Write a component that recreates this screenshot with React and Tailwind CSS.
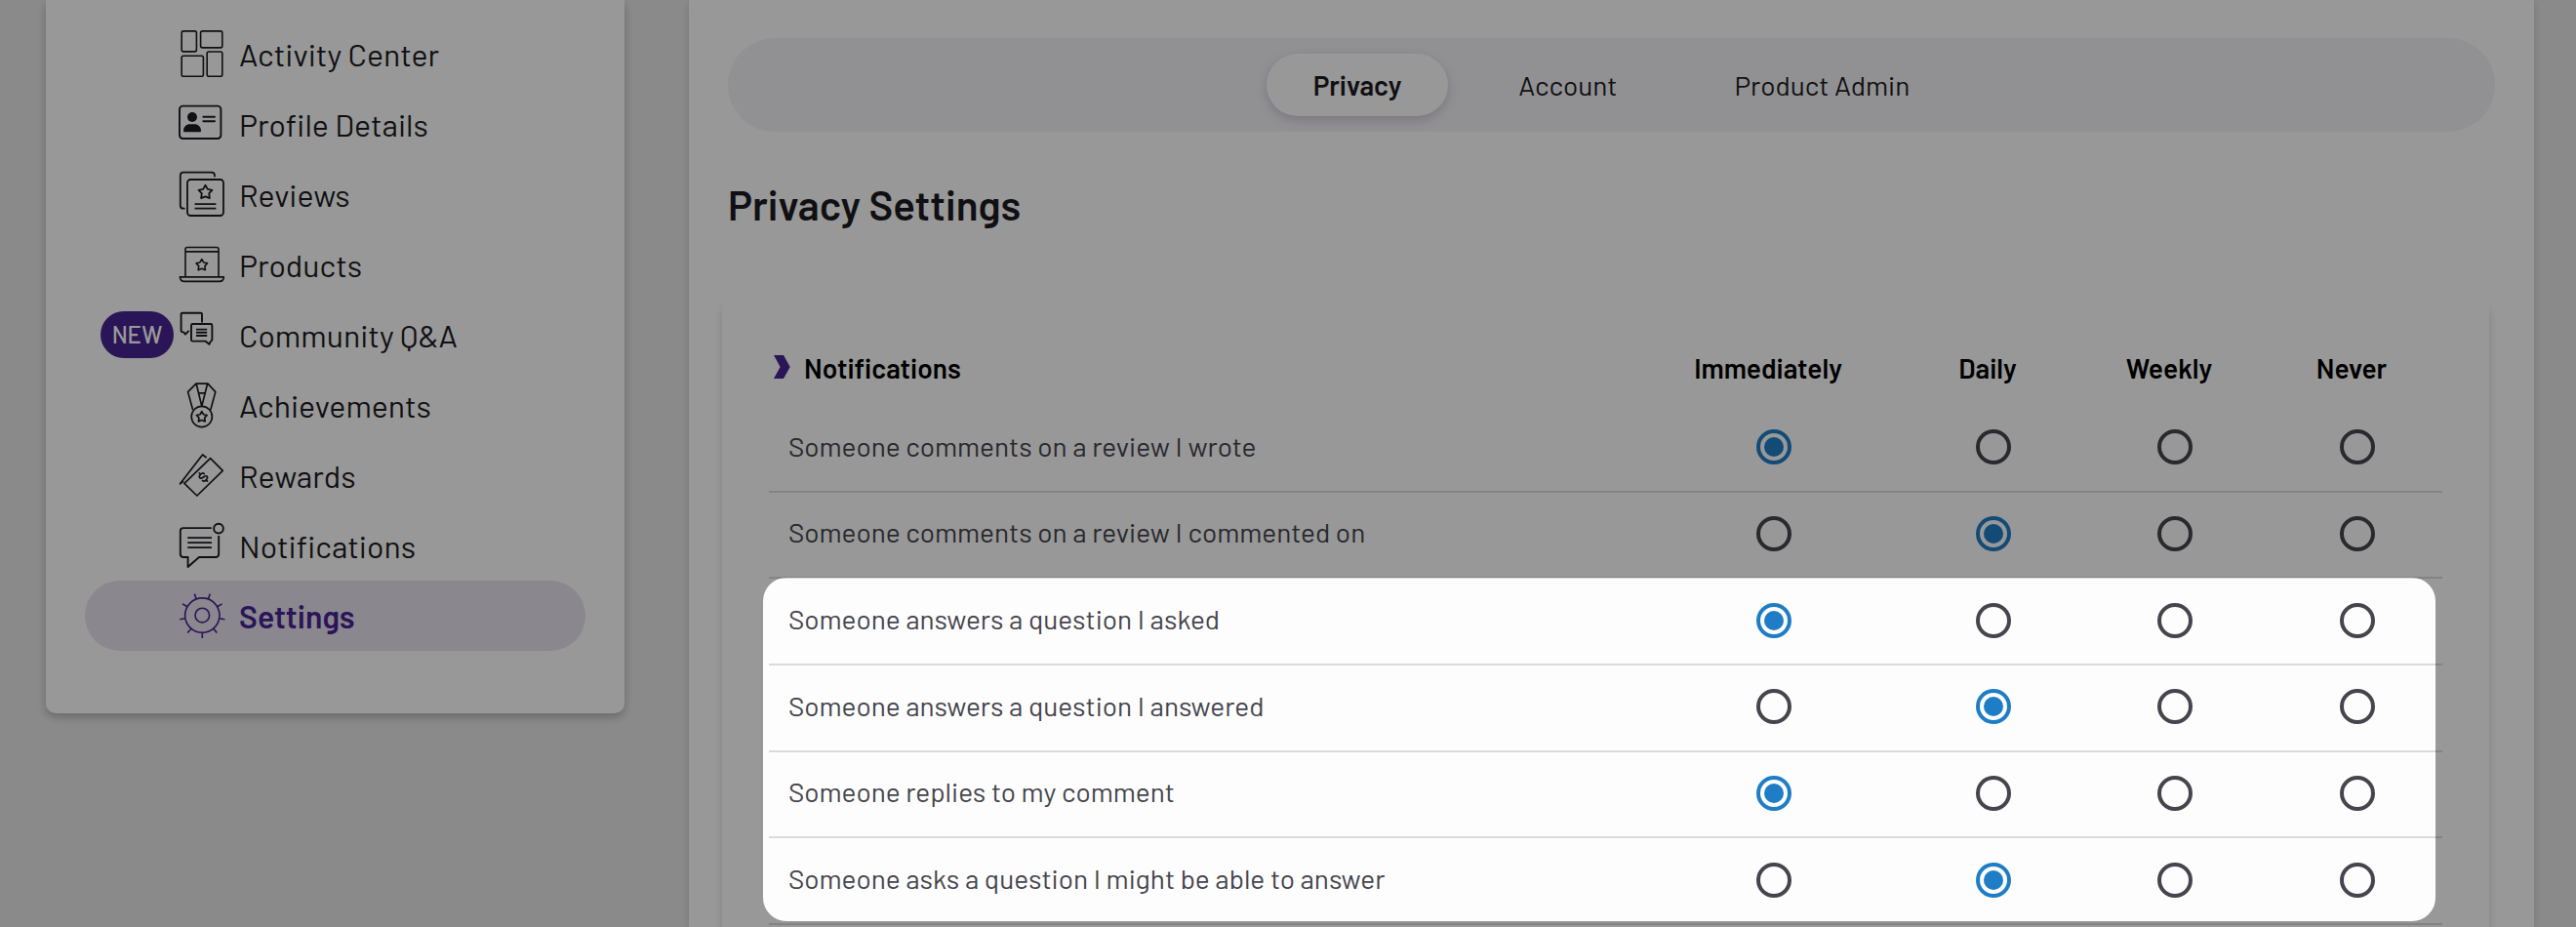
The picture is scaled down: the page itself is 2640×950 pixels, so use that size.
const STAR =
  "M0 -1 L0.32 -0.44 L0.96 -0.31 L0.52 0.17 L0.6 0.84 L0 0.6 L-0.6 0.84 L-0.52 0.17 L-0.96 -0.31 L-0.32 -0.44 Z";

function Star({ x, y, r, w = 1.6 }) {
  return (
    <path
      d={STAR}
      transform={`translate(${x} ${y}) scale(${r})`}
      strokeWidth={w / r}
      strokeLinejoin="round"
    />
  );
}

function Icon({ children, width = 1.6 }) {
  return (
    <svg
      viewBox="0 0 48 48"
      className="size-12 shrink-0"
      fill="none"
      stroke="currentColor"
      strokeWidth={width}
    >
      {children}
    </svg>
  );
}

const ActivityIcon = () => (
  <Icon width={1.6}>
    <rect x="3.2" y="0.9" width="15.2" height="21" rx="1.8" />
    <rect x="22.6" y="0.9" width="22.2" height="17" rx="1.8" />
    <rect x="3.2" y="26.3" width="22.2" height="21" rx="1.8" />
    <rect x="29.2" y="22" width="15.6" height="25.3" rx="1.8" />
  </Icon>
);

const ProfileIcon = () => (
  <Icon width={1.9}>
    <rect x="1" y="5.6" width="42.4" height="33.4" rx="3.4" />
    <circle cx="14" cy="17" r="5" fill="currentColor" stroke="none" />
    <path
      d="M5 31.2C5 27 8 24.3 11.6 24.3H16.4C20 24.3 23 27 23 31.2Q23 32.3 22 32.3H6Q5 32.3 5 31.2Z"
      fill="currentColor"
      stroke="none"
    />
    <path d="M25.3 16.7H37M25.3 21.2H37" strokeLinecap="round" />
  </Icon>
);

const ReviewsIcon = () => (
  <Icon width={1.8}>
    <rect x="9" y="9" width="37" height="37" rx="3.4" />
    <path
      d="M37 5.6V5Q37 1.7 33.6 1.7H5Q1.8 1.7 1.8 5V35.4Q1.8 38.7 5 38.7H5.8"
      strokeLinecap="round"
    />
    <Star x={27.5} y={22} r={7.2} w={1.8} />
    <path d="M16.6 34.1H38.4M16.6 38.7H38.4" />
  </Icon>
);

const ProductsIcon = () => (
  <Icon width={1.6}>
    <path d="M7 36.6V8.4Q7 6.5 9 6.5H39Q41 6.5 41 8.4V36.6M7 10.9H41" />
    <path d="M1.4 36.9H46.4Q46 41.4 42 41.4H5.8Q1.8 41.4 1.4 36.9Z" strokeLinejoin="round" />
    <Star x={23.8} y={24.6} r={6} w={1.6} />
  </Icon>
);

const CommunityIcon = () => (
  <Icon width={1.9}>
    <path
      d="M24 11.4V3Q24 1.7 22.6 1.7H4Q2.6 1.7 2.6 3V19.6Q2.6 21.4 4.2 21.4H5.2L7 23.6L10.6 19.8"
      strokeLinejoin="round"
    />
    <path
      d="M14.4 13H32.8Q34.4 13 34.4 14.4V29Q34.4 30.4 33 30.6L31.4 33.8L27.4 30.6H14.4Q13 30.6 13 29.2V14.4Q13 13 14.4 13Z"
      strokeLinejoin="round"
    />
    <path d="M18 18.6H29.2M18 21.8H29.2M18 25H29.2" />
  </Icon>
);

const AchievementsIcon = () => (
  <Icon width={1.7}>
    <path
      d="M14.6 29L9.6 10.6L18 2.2H30L37.8 10.6L32.8 29M18.2 2.2L23.8 25.4L29.6 2.2M20.4 11.8H27.2"
      strokeLinejoin="round"
    />
    <circle cx="23.8" cy="36" r="10.6" />
    <Star x={23.8} y={36.2} r={5.6} w={1.7} />
  </Icon>
);

const RewardsIcon = () => (
  <Icon width={1.7}>
    <path d="M32.6 6.6L45.3 19.4L18.9 45L5.9 32.4Z" strokeLinejoin="round" />
    <path d="M28.6 6L24.6 3L1.6 32.8L5 30" strokeLinejoin="round" />
    <g transform="translate(25.4 26) rotate(-45)">
      <path
        d="M3 -1.8C3 -3.2 1.7 -4 0 -4C-1.9 -4 -3.1 -3.2 -3.1 -2C-3.1 0.6 3.2 -0.6 3.2 2C3.2 3.3 1.9 4 0 4C-1.9 4 -3.1 3.2 -3.1 1.8M0 -5.8V-4M0 4V5.8"
        strokeLinecap="round"
        strokeWidth="1.6"
      />
    </g>
  </Icon>
);

const NotificationsIcon = () => (
  <Icon width={1.9}>
    <path
      d="M33.8 6.1H5Q1.8 6.1 1.8 9.3V32.8Q1.8 36 5 36H9.6V46L21 36H38Q41.2 36 41.2 32.8V14"
      strokeLinejoin="round"
    />
    <circle cx="41" cy="6.6" r="4.9" />
    <path d="M9.3 16.1H34M9.3 21.1H34M9.3 26.1H34" />
  </Icon>
);

const SettingsIcon = () => (
  <Icon width={1.6}>
    <circle cx="24.3" cy="23.6" r="17.7" />
    <circle cx="24.3" cy="23.6" r="7.3" />
    {[0, 40, 80, 120, 160, 200, 240, 280, 320].map((a) => (
      <path key={a} d="M24.3 41.3V47" transform={`rotate(${a} 24.3 23.6)`} />
    ))}
  </Icon>
);

const NAV = [
  { label: "Activity Center", icon: ActivityIcon },
  { label: "Profile Details", icon: ProfileIcon },
  { label: "Reviews", icon: ReviewsIcon },
  { label: "Products", icon: ProductsIcon },
  { label: "Community Q&A", icon: CommunityIcon, isNew: true },
  { label: "Achievements", icon: AchievementsIcon },
  { label: "Rewards", icon: RewardsIcon },
  { label: "Notifications", icon: NotificationsIcon },
  { label: "Settings", icon: SettingsIcon, active: true },
];

const COLUMNS = ["Immediately", "Daily", "Weekly", "Never"];

const ROWS = [
  ["Someone comments on a review I wrote", 0],
  ["Someone comments on a review I commented on", 1],
  ["Someone answers a question I asked", 0],
  ["Someone answers a question I answered", 1],
  ["Someone replies to my comment", 0],
  ["Someone asks a question I might be able to answer", 1],
];

function NavItem({ label, icon: Glyph, isNew, active }) {
  return (
    <a
      className={
        "flex h-[72px] items-center rounded-full text-[32px] " +
        (active ? "bg-[#e6e1ed] font-semibold text-[#472393]" : "text-[#1c1c22]")
      }
    >
      <span className="flex w-24 shrink-0 justify-end pr-[5px]">
        {isNew && (
          <span className="flex h-12 w-[75px] shrink-0 items-center justify-center rounded-full bg-[#472393] text-2xl font-medium text-white">
            NEW
          </span>
        )}
      </span>
      <Glyph />
      <span className="ml-[14px] whitespace-nowrap">{label}</span>
    </a>
  );
}

function Sidebar() {
  return (
    <aside className="h-[731px] w-[593px] shrink-0 rounded-b-[10px] bg-[#fdfdfd] px-10 pt-[19px] shadow-[0_4px_10px_rgba(0,0,0,0.24)]">
      <nav className="flex flex-col">
        {NAV.map((item) => (
          <NavItem key={item.label} {...item} />
        ))}
      </nav>
    </aside>
  );
}

function Tabs() {
  return (
    <div className="flex h-24 items-center justify-center gap-6 rounded-full bg-[#f2f2f5] text-[28px] text-[#1c1c22]">
      <span className="flex h-16 items-center rounded-full bg-[#fdfdfd] px-12 font-semibold shadow-[0_4px_12px_rgba(60,20,90,0.2)]">
        Privacy
      </span>
      <span className="flex h-16 items-center px-12">Account</span>
      <span className="flex h-16 items-center px-12">Product Admin</span>
    </div>
  );
}

function Radio({ checked }) {
  return checked ? (
    <span className="flex size-9 items-center justify-center rounded-full border-4 border-[#1f7dc5]">
      <span className="size-5 rounded-full bg-[#1f7dc5]" />
    </span>
  ) : (
    <span className="size-9 rounded-full border-4 border-[#45454d]" />
  );
}

function NotificationTable() {
  return (
    <div className="w-[1715px]">
      <div className="grid h-[74px] grid-cols-[891px_278px_172px_200px_174px] items-center bg-[#fefefe] pb-[5px] text-[28px] font-semibold text-black">
        <div className="flex items-center pl-[5px]">
          <svg viewBox="0 0 17 24" className="-mt-0.5 h-6 w-[17px]" fill="#472393">
            <path d="M0 0H10L16.7 12L10 24H0L6.6 12Z" />
          </svg>
          <span className="ml-[14px]">Notifications</span>
        </div>
        {COLUMNS.map((c) => (
          <div key={c} className="flex justify-center pr-3">
            {c}
          </div>
        ))}
      </div>
      {ROWS.map(([label, value]) => (
        <div
          key={label}
          className="grid h-[88.66px] grid-cols-[891px_278px_172px_200px_174px] items-center border-b-2 border-[#dadadc] text-[28px] text-[#45454d]"
        >
          <div className="pb-[5px] pl-5">{label}</div>
          {COLUMNS.map((c, i) => (
            <div key={c} className="flex justify-center pb-[2px]">
              <Radio checked={i === value} />
            </div>
          ))}
        </div>
      ))}
    </div>
  );
}

export default function App() {
  return (
    <div className="relative flex h-[950px] w-[2640px] overflow-hidden bg-[#e7e7e7] pl-[47px] font-['Barlow',Roboto,sans-serif]">
      <Sidebar />
      <main className="ml-[66px] h-[950px] w-[1891px] shrink-0 bg-[#fdfdfd] px-10 pt-[39px] shadow-[0_2px_8px_rgba(0,0,0,0.14)]">
        <Tabs />
        <h1 className="mt-[49px] text-[42px] leading-[50px] font-semibold text-[#1c1c22]">
          Privacy Settings
        </h1>
        <section className="mt-[58px] mr-[6px] -ml-[6px] h-[760px] rounded-[24px] bg-[#fdfdfd] px-12 pt-[50px] shadow-[0_12px_8px_rgba(0,0,0,0.14)]">
          <NotificationTable />
        </section>
      </main>
      <div className="absolute top-[592px] left-[782px] h-[352px] w-[1714px] rounded-[24px] shadow-[0_0_0_3000px_rgba(0,0,0,0.4)]" />
    </div>
  );
}
